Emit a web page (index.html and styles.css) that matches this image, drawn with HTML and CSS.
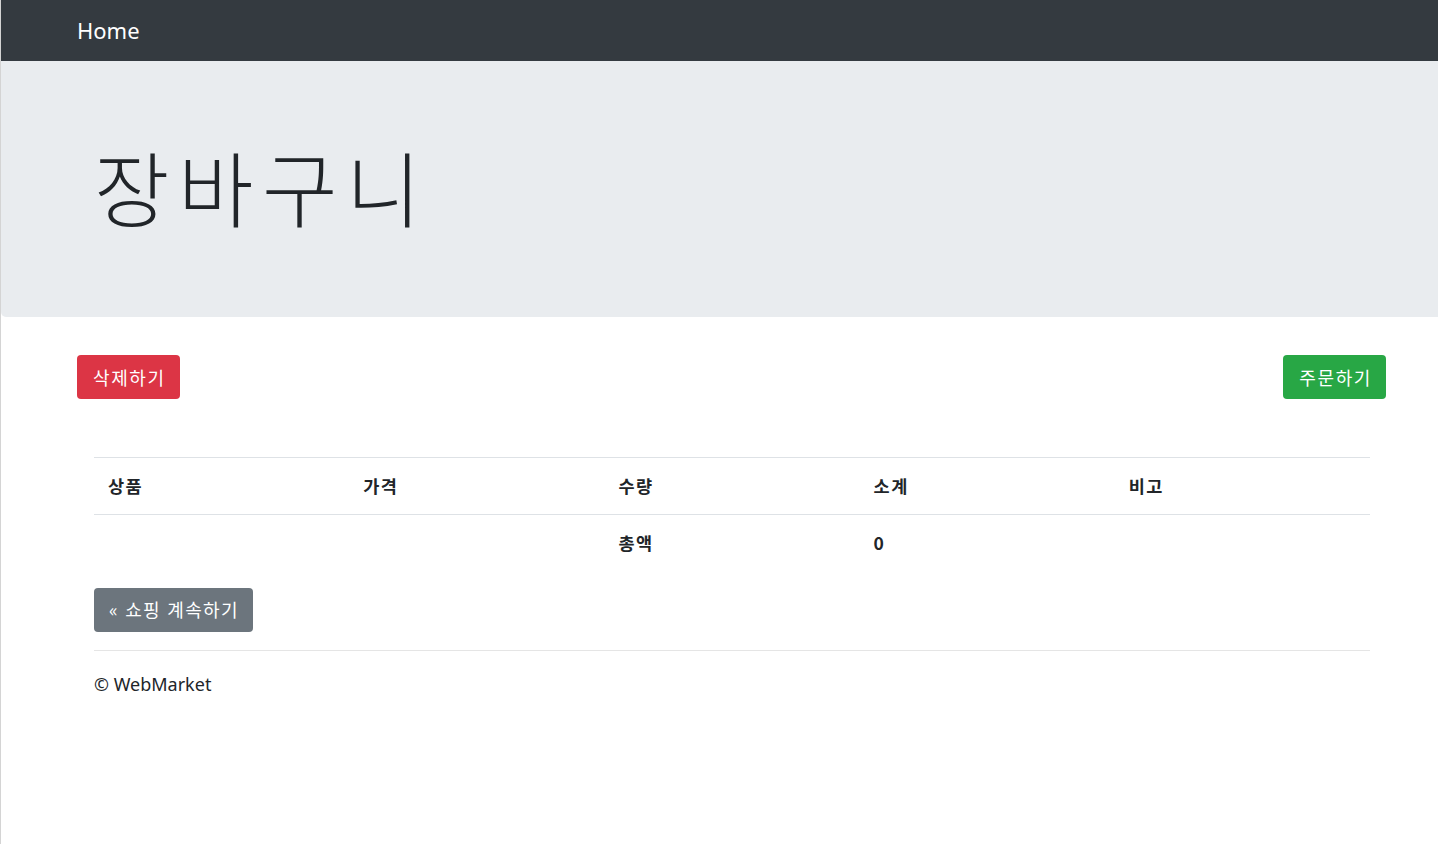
FILE: index.html
```html
<!DOCTYPE html>
<html lang="ko">
<head>
<meta charset="utf-8">
<title>장바구니</title>
<link rel="stylesheet" href="styles.css">
</head>
<body>
<div class="page">
  <nav class="navbar">
    <div class="container">
      <a class="brand" href="#">Home</a>
    </div>
  </nav>
  <div class="jumbotron">
    <div class="container">
      <h1 class="display">장바구니</h1>
    </div>
  </div>
  <div class="container">
    <div class="actions">
      <a class="btn btn-danger" href="#">삭제하기</a>
      <a class="btn btn-success" href="#">주문하기</a>
    </div>
    <div class="inner">
      <table class="table">
        <thead>
          <tr><th>상품</th><th>가격</th><th>수량</th><th>소계</th><th>비고</th></tr>
        </thead>
        <tbody>
          <tr><th></th><th></th><th>총액</th><th>0</th><th></th></tr>
        </tbody>
      </table>
      <a class="btn btn-secondary" href="#">« 쇼핑 계속하기</a>
      <hr class="rule">
      <footer class="footer">© WebMarket</footer>
    </div>
  </div>
</div>
</body>
</html>
```
FILE: styles.css
```css
* { box-sizing: border-box; }
html, body { margin: 0; padding: 0; background: #fff; }
body {
  font-family: "Noto Sans", "Noto Sans CJK KR", sans-serif;
  font-size: 18.4px;
  line-height: 1.5;
  color: #212529;
}
.page {
  border-left: 1px solid #d4d4d4;
  min-height: 844px;
}
.container {
  padding-left: 76px;
  padding-right: 52px;
}
.navbar {
  background: #343a40;
  height: 61px;
  display: flex;
  align-items: center;
}
.navbar .container { width: 100%; padding-top: 2px; }
.brand {
  color: #fff;
  text-decoration: none;
  font-size: 22px;
  line-height: 1;
}
.jumbotron {
  background: #e9ecef;
  height: 256px;
  border-radius: 0 0 0 5px;
  margin-bottom: 38px;
  display: flex;
  align-items: center;
}
.jumbotron .container { width: 100%; padding-bottom: 6px; }
.display {
  margin: 0 0 0 17px;
  font-family: "Noto Sans CJK KR", sans-serif;
  font-size: 82px;
  font-weight: 300;
  line-height: 1.2;
  letter-spacing: 8.5px;
}
.actions {
  display: flex;
  justify-content: space-between;
  margin-bottom: 58px;
}
.btn {
  display: inline-flex;
  align-items: center;
  height: 44px;
  padding: 0 14px 0 16px;
  border-radius: 4px;
  color: #fff;
  text-decoration: none;
  font-family: "Noto Sans CJK KR", sans-serif;
  font-size: 18px;
  letter-spacing: 1.6px;
}
.btn-danger { background: #dc3545; }
.btn-success { background: #28a745; }
.btn-secondary { background: #6c757d; padding: 0 14px 0 15px; letter-spacing: 1.3px; }
.inner {
  padding-left: 17px;
  padding-right: 16px;
}
.table {
  width: 100%;
  border-collapse: collapse;
  table-layout: fixed;
  margin-bottom: 17px;
}
.table th {
  text-align: left;
  font-family: "Noto Sans CJK KR", sans-serif;
  font-weight: 700;
  font-size: 17.5px;
  letter-spacing: 1.5px;
  padding: 0 14px;
  height: 57px;
  vertical-align: middle;
}
.table thead th {
  border-top: 1px solid #dee2e6;
  border-bottom: 1px solid #dee2e6;
}
.table tbody th { height: 56px; }
.rule {
  border: 0;
  border-top: 1px solid #e5e5e5;
  margin: 18px 0 20px;
}
.footer {
  font-size: 18px;
}
```
